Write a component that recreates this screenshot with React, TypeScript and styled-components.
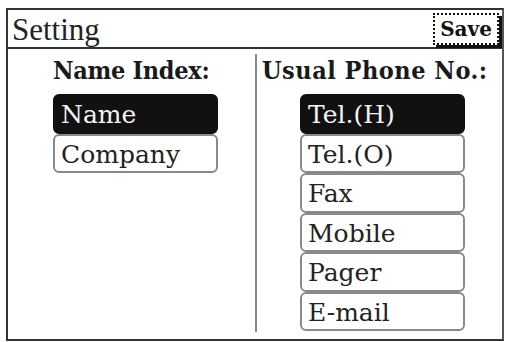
import React from "react";
import styled, { createGlobalStyle } from "styled-components";

const Global = createGlobalStyle`
  html, body { margin: 0; padding: 0; background: #fff; }
  body { font-family: "DejaVu Serif", serif; color: #111; }
`;

const Frame = styled.div`
  box-sizing: border-box;
  margin: 8px 0 0 6px;
  width: 498px;
  height: 333px;
  border: 2px solid #333;
  border-right-color: #555;
  display: flex;
  flex-direction: column;
`;

const TitleBar = styled.div`
  box-sizing: border-box;
  height: 39px;
  border-bottom: 2px solid #333;
  display: flex;
  align-items: center;
  justify-content: space-between;
  padding-left: 4px;
`;

const Title = styled.div`
  font-family: "Liberation Serif", serif;
  font-size: 31px;
  line-height: 1;
  margin-top: 2px;
  color: #222;
`;

const SaveButton = styled.div`
  box-sizing: border-box;
  width: 66px;
  height: 32px;
  margin-right: 3px;
  border: 2px dotted #111;
  box-shadow: 3px 3px 0 #111;
  display: flex;
  align-items: center;
  justify-content: center;
  font-family: "DejaVu Serif", serif;
  font-weight: bold;
  font-size: 20px;
  line-height: 1;
  color: #111;
`;

const Body = styled.div`
  flex: 1;
  display: flex;
`;

const Column = styled.div<{ $width: number; $pad: number; $itemPad: number }>`
  box-sizing: border-box;
  width: ${(p) => p.$width}px;
  padding-left: ${(p) => p.$pad}px;
  padding-top: 7px;
  display: flex;
  flex-direction: column;
  --item-pad: ${(p) => p.$itemPad}px;
`;

const Divider = styled.div`
  width: 2px;
  background: #888;
  margin: 5px 0 7px;
`;

const Heading = styled.div<{ $spacing?: number }>`
  font-family: "DejaVu Serif Condensed", "DejaVu Serif", serif;
  font-weight: bold;
  font-size: 25px;
  line-height: 30px;
  letter-spacing: ${(p) => p.$spacing ?? 0}px;
  color: #1a1a1a;
  white-space: nowrap;
`;

const List = styled.div`
  margin-top: 8px;
  margin-left: var(--item-pad);
  display: flex;
  flex-direction: column;
`;

const Item = styled.div<{ $selected?: boolean }>`
  box-sizing: border-box;
  width: 165px;
  height: 39.5px;
  border: 2px solid ${(p) => (p.$selected ? "#111" : "#8a8a8a")};
  border-radius: 6px;
  background: ${(p) => (p.$selected ? "#111" : "#fff")};
  color: ${(p) => (p.$selected ? "#f4f4f4" : "#222")};
  font-family: "DejaVu Serif", serif;
  font-size: 25px;
  line-height: 1;
  display: flex;
  align-items: center;
  padding-left: 6px;
  padding-top: 2px;
`;

export default function App() {
  return (
    <>
      <Global />
      <Frame>
        <TitleBar>
          <Title>Setting</Title>
          <SaveButton>Save</SaveButton>
        </TitleBar>
        <Body>
          <Column $width={247} $pad={45} $itemPad={0}>
            <Heading $spacing={-0.3}>Name Index:</Heading>
            <List>
              <Item $selected>Name</Item>
              <Item>Company</Item>
            </List>
          </Column>
          <Divider />
          <Column $width={245} $pad={5} $itemPad={38}>
            <Heading $spacing={0.5}>Usual Phone No.:</Heading>
            <List>
              <Item $selected>Tel.(H)</Item>
              <Item>Tel.(O)</Item>
              <Item>Fax</Item>
              <Item>Mobile</Item>
              <Item>Pager</Item>
              <Item>E-mail</Item>
            </List>
          </Column>
        </Body>
      </Frame>
    </>
  );
}
